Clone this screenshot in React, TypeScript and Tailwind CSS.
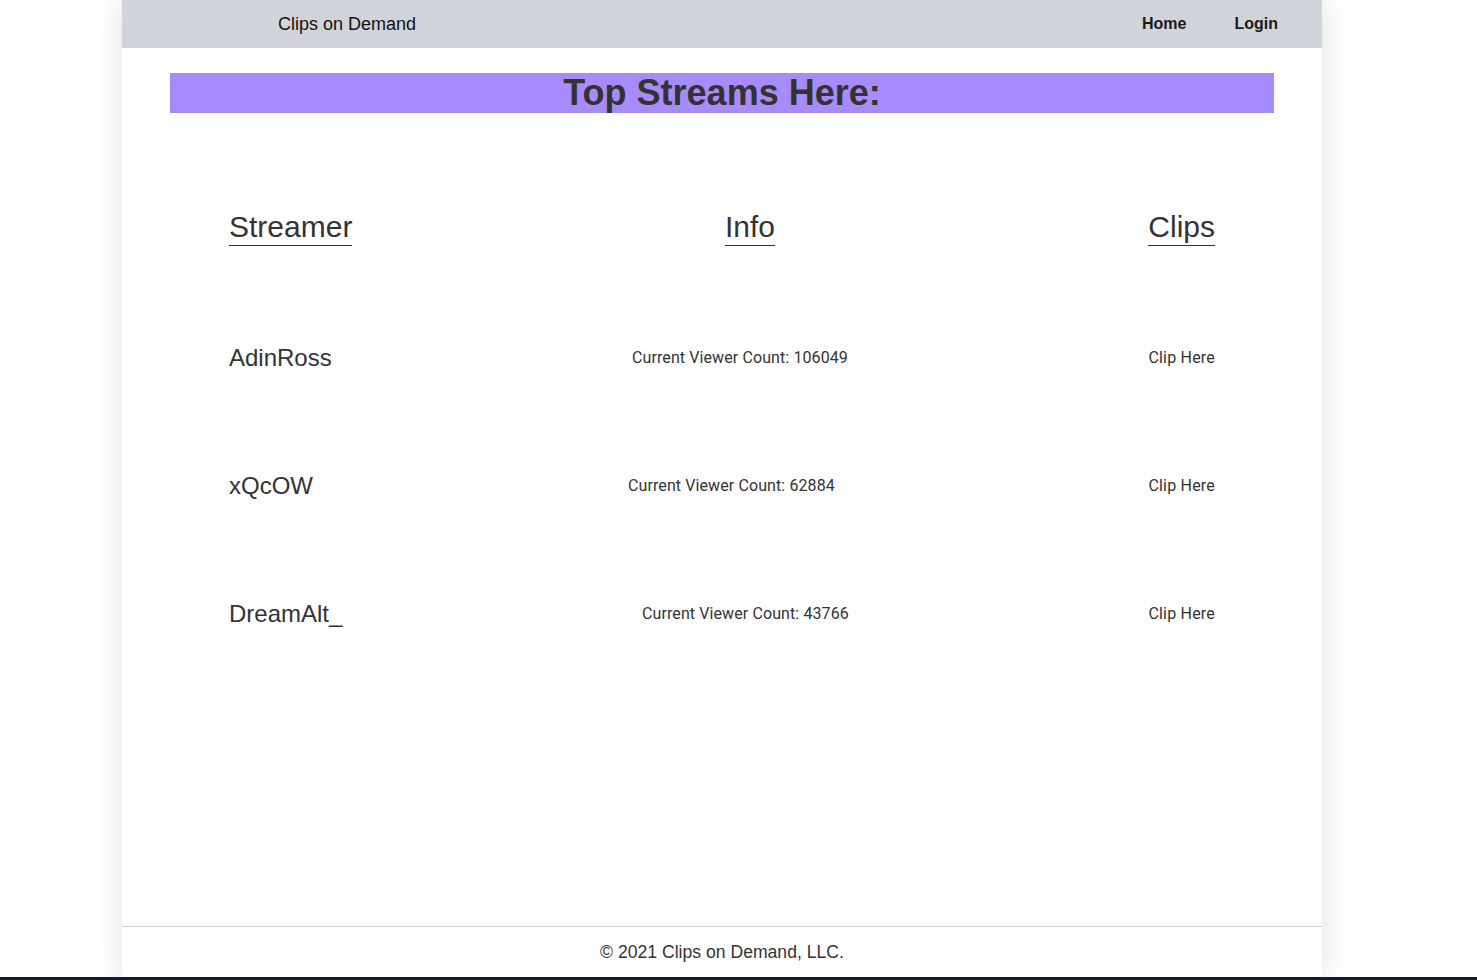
import React from "react"

const streams = [
  { name: "AdinRoss", viewers: 106049, pad: "pl-[7px]" },
  { name: "xQcOW", viewers: 62884, pad: "pl-[3px]" },
  { name: "DreamAlt_", viewers: 43766, pad: "pl-[17px]" },
]

export default function App() {
  return (
    <div className="h-screen bg-white flex flex-col font-['Liberation_Sans',Arial,sans-serif] text-[#333]">
      <div className="flex-1 flex">
        <div className="ml-[122px] w-[1200px] flex flex-col bg-white shadow-[0_0_28px_rgba(0,0,0,0.13)]">
          <nav className="h-12 bg-[#d1d5db] flex items-center pl-[156px] pr-[44px]">
            <span className="text-[18px] text-[#111]">Clips on Demand</span>
            <div className="ml-auto flex gap-12 text-[16px] font-bold text-[#1a1a1a]">
              <a href="#">Home</a>
              <a href="#">Login</a>
            </div>
          </nav>

          <main className="flex-1 flex flex-col">
            <div className="mx-12 mt-[25px] h-10 bg-[#a78bfa] flex items-center justify-center">
              <h1 className="text-[36px] font-bold leading-none text-[#333]">Top Streams Here:</h1>
            </div>

            <div className="flex px-[107px] mt-[95px]">
              <div className="w-[396px]">
                <span className="text-[30px] border-b border-[#333] leading-[37px] inline-block">Streamer</span>
              </div>
              <div className="w-[250px] pl-[100px]">
                <span className="text-[30px] border-b border-[#333] leading-[37px] inline-block">Info</span>
              </div>
              <div className="ml-auto">
                <span className="text-[30px] border-b border-[#333] leading-[37px] inline-block">Clips</span>
              </div>
            </div>

            <div className="flex flex-col mt-[48px]">
              {streams.map((s) => (
                <div key={s.name} className="flex items-center px-[107px] h-32">
                  <div className="w-[396px] text-[24px]">{s.name}</div>
                  <div className={`w-[250px] text-[16px] tracking-[0.1px] font-['Roboto',sans-serif] ${s.pad}`}>
                    Current Viewer Count: {s.viewers}
                  </div>
                  <a href="#" className="ml-auto text-[16px] tracking-[0.2px] font-['Roboto',sans-serif]">Clip Here</a>
                </div>
              ))}
            </div>
          </main>

          <footer className="h-[51px] border-t border-[#d0d0d0] flex items-center justify-center">
            <span className="text-[17.6px] text-[#333]">© 2021 Clips on Demand, LLC.</span>
          </footer>
        </div>
      </div>
      <div className="h-[3px] bg-[#0f1c33]"></div>
    </div>
  )
}
